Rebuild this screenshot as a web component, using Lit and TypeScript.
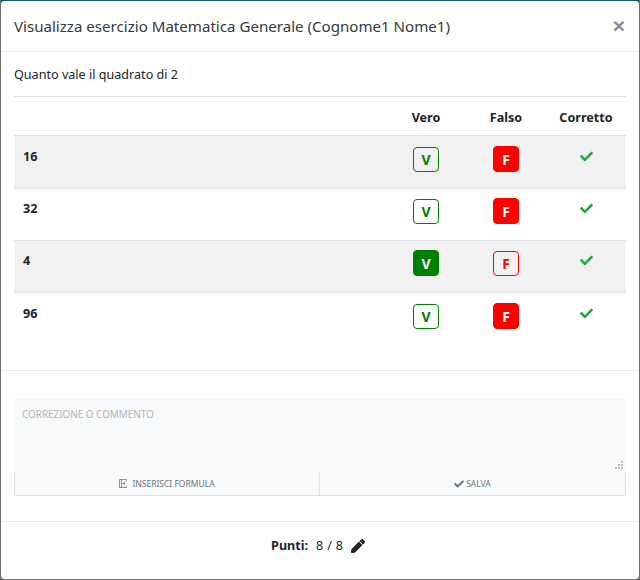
import { LitElement, html, css } from "lit";
import { customElement } from "lit/decorators.js";

const CHECK = "M173.898 439.404l-166.4-166.4c-9.997-9.997-9.997-26.206 0-36.204l36.203-36.204c9.997-9.998 26.207-9.998 36.204 0L192 312.69 432.095 72.596c9.997-9.997 26.207-9.997 36.204 0l36.203 36.204c9.997 9.997 9.997 26.206 0 36.204l-294.4 294.401c-9.998 9.997-26.207 9.997-36.204-.001z";
const PEN = "M290.74 93.24l128.02 128.02-277.99 277.99-114.14 12.6C11.35 513.54-1.56 500.62.14 485.34l12.7-114.22 277.9-277.88zm207.2-19.06l-60.11-60.11c-18.75-18.75-49.16-18.75-67.91 0l-56.55 56.55 128.02 128.02 56.55-56.55c18.75-18.76 18.75-49.16 0-67.91z";

const rows = [
  { label: "16", v: false, f: true },
  { label: "32", v: false, f: true },
  { label: "4", v: true, f: false },
  { label: "96", v: false, f: true },
];

@customElement("app-root")
export class AppRoot extends LitElement {
  static styles = css`
    :host {
      display: block;
      width: 640px;
      height: 580px;
      box-sizing: border-box;
      padding: 0 1px 1px 1px;
      border-top: 1px solid #0b5a70;
      background: #6f6f6f;
      font-family: "Noto Sans", "Open Sans", sans-serif;
      color: #212529;
      overflow: hidden;
    }
    .modal {
      height: 578px;
      width: 638px;
      background: #fff;
      border-radius: 4px;
      display: flex;
      flex-direction: column;
      box-sizing: border-box;
    }
    .head {
      height: 51px;
      flex: none;
      box-sizing: border-box;
      border-bottom: 1px solid #e9ecef;
      padding: 0 13px;
      display: flex;
      align-items: center;
      justify-content: space-between;
    }
    .title {
      font-size: 15.1px;
      color: #343a40;
    }
    .close {
      font-size: 21px;
      font-weight: 700;
      color: #888;
      line-height: 1;
      margin-top: -2px;
      margin-right: 1px;
      font-family: "Liberation Sans", sans-serif;
    }
    .body {
      padding: 0 13px;
      height: 319px;
      flex: none;
      box-sizing: border-box;
      border-bottom: 1px solid #e9ecef;
    }
    .q {
      height: 45px;
      box-sizing: border-box;
      border-bottom: 1px solid #dee2e6;
      font-size: 12.6px;
      line-height: 16px;
      padding-top: 15px;
    }
    .row {
      display: grid;
      grid-template-columns: 1fr 80px 80px 80px;
      box-sizing: border-box;
    }
    .thead {
      height: 39px;
      font-size: 12.6px;
      font-weight: 700;
      line-height: 16px;
      padding-top: 13px;
      border-bottom: 1px solid #dee2e6;
      text-align: center;
    }
    .item {
      height: 52px;
      border-bottom: 1px solid #dee2e6;
    }
    .item.odd {
      background: #f1f1f1;
    }
    .item.first { height: 53px; }
    .item.last { border-bottom: none; }
    .label {
      font-size: 12.6px;
      font-weight: 700;
      line-height: 16px;
      padding: 13px 0 0 9px;
    }
    .cell {
      display: flex;
      justify-content: center;
      padding-top: 10px;
    }
    .btn {
      width: 26px;
      height: 26px;
      box-sizing: border-box;
      border-radius: 4px;
      border: 1px solid;
      display: flex;
      align-items: center;
      justify-content: center;
      font-size: 14px;
      font-weight: 700;
      line-height: 1;
      padding-top: 1px;
    }
    .btn.small { height: 25px; margin-top: 1px; }
    .v { color: #008000; border-color: #008000; }
    .v.on { background: #008000; color: #fff; }
    .f { color: #ff0000; border-color: #ff0000; }
    .f.on { background: #ff0000; color: #fff; }
    .ok {
      display: flex;
      justify-content: center;
      padding-top: 13.5px;
    }
    .ok svg { width: 13px; height: 13px; fill: #28a745; display: block; }
    .tight .label { padding-top: 12px; }
    .tight .cell { padding-top: 9px; }
    .tight .ok { padding-top: 12.5px; }
    .form {
      flex: 1;
      padding: 28px 13px 0;
      box-sizing: border-box;
      border-bottom: 1px solid #e9ecef;
    }
    .area {
      position: relative;
    }
    textarea {
      display: block;
      width: 100%;
      height: 73px;
      box-sizing: border-box;
      background: #f8f9fa;
      border: none;
      outline: none;
      margin: 0;
      padding: 9px 8px;
      font-family: inherit;
      font-size: 9.9px;
      line-height: 12px;
      resize: none;
    }
    textarea::placeholder { color: #b5b5b5; opacity: 1; }
    .grip {
      position: absolute;
      right: 3px;
      bottom: 3px;
      display: block;
      fill: #b9b9b9;
    }
    .actions {
      display: grid;
      grid-template-columns: 306px 306px;
      height: 24px;
    }
    .act {
      box-sizing: border-box;
      background: #f8f9fa;
      border: 1px solid #dee2e6;
      border-top: none;
      display: flex;
      align-items: center;
      justify-content: center;
      gap: 3px;
      font-size: 8.5px;
      color: #6c757d;
    }
    .act + .act { border-left: none; }
    .act svg { display: block; }
    .formula-label { margin-left: 2px; }
    .save-label { margin-left: -1px; }
    .foot {
      height: 57px;
      flex: none;
      display: flex;
      align-items: center;
      justify-content: center;
      font-size: 12.6px;
      padding-bottom: 10px;
      padding-right: 4px;
      box-sizing: border-box;
    }
    .foot b { margin-right: 8px; }
    .foot span { word-spacing: 0.6px; }
    .foot svg { width: 14px; height: 14px; margin-left: 8px; fill: #212529; display: block; }
  `;

  render() {
    return html`
      <div class="modal">
        <div class="head">
          <span class="title">Visualizza esercizio Matematica Generale (Cognome1 Nome1)</span>
          <span class="close">×</span>
        </div>
        <div class="body">
          <div class="q">Quanto vale il quadrato di 2</div>
          <div class="row thead"><span></span><span>Vero</span><span>Falso</span><span>Corretto</span></div>
          ${rows.map(
            (r, i) => html`
              <div class="row item ${i % 2 === 0 ? "odd" : ""} ${i === 0 ? "first" : ""} ${i === 3 ? "last" : ""} ${i === 1 || i === 2 ? "tight" : ""}">
                <div class="label">${r.label}</div>
                <div class="cell"><div class="btn v ${r.v ? "on" : "small"}">V</div></div>
                <div class="cell"><div class="btn f ${r.f ? "on" : "small"}">F</div></div>
                <div class="ok"><svg viewBox="0 0 512 512"><path d=${CHECK}></path></svg></div>
              </div>
            `
          )}
        </div>
        <div class="form">
          <div class="area">
            <textarea placeholder="CORREZIONE O COMMENTO"></textarea>
            <svg class="grip" width="8" height="8" viewBox="0 0 8 8"><rect x="6" y="0" width="2" height="2"></rect><rect x="3" y="3" width="2" height="2"></rect><rect x="6" y="3" width="2" height="2"></rect><rect x="0" y="6" width="2" height="2"></rect><rect x="3" y="6" width="2" height="2"></rect><rect x="6" y="6" width="2" height="2"></rect></svg>
          </div>
          <div class="actions">
            <div class="act">
              <svg width="8" height="9" viewBox="0 0 8 9" fill="none" stroke="#777" stroke-width="0.8"><path d="M.5.5h7v1.7M.5.5v8M2.4.5v8M.5 8.5h7V6.8M2.4 4.5h3M5.4 3v3"></path></svg>
              <span class="formula-label">INSERISCI FORMULA</span>
            </div>
            <div class="act">
              <svg width="10" height="10" viewBox="0 0 512 512" fill="#6c757d"><path d=${CHECK}></path></svg>
              <span class="save-label">SALVA</span>
            </div>
          </div>
        </div>
        <div class="foot">
          <b>Punti:</b><span>8 / 8</span>
          <svg viewBox="0 0 512 512"><path d=${PEN}></path></svg>
        </div>
      </div>
    `;
  }
}
